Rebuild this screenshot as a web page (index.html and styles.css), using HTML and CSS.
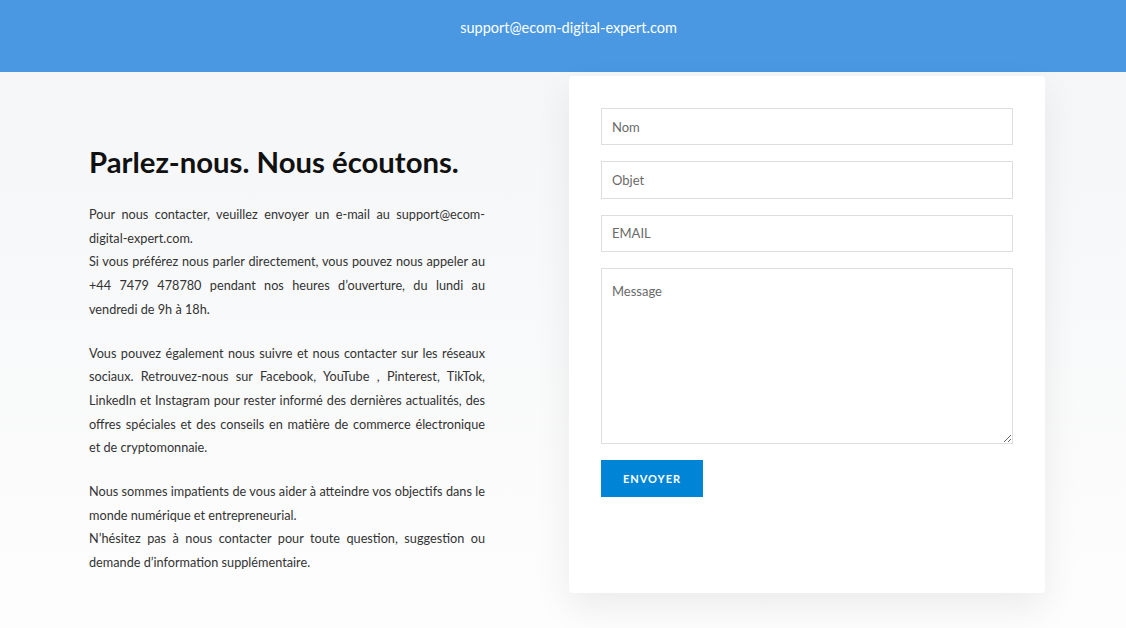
FILE: index.html
```html
<!DOCTYPE html>
<html lang="fr">
<head>
<meta charset="utf-8">
<title>Contact</title>
<link rel="stylesheet" href="styles.css">
</head>
<body>
<header class="topbar">
  <span class="topbar-email">support@ecom-digital-expert.com</span>
</header>
<main class="contact">
  <section class="intro">
    <h1 class="intro-title">Parlez-nous. Nous écoutons.</h1>
    <p class="intro-text">Pour nous contacter, veuillez envoyer un e-mail au support@ecom-digital-expert.com.<br>Si vous préférez nous parler directement, vous pouvez nous appeler au +44 7479 478780 pendant nos heures d’ouverture, du lundi au vendredi de 9h à 18h.</p>
    <p class="intro-text">Vous pouvez également nous suivre et nous contacter sur les réseaux sociaux. Retrouvez-nous sur Facebook, YouTube , Pinterest, TikTok, LinkedIn et Instagram pour rester informé des dernières actualités, des offres spéciales et des conseils en matière de commerce électronique et de cryptomonnaie.</p>
    <p class="intro-text">Nous sommes impatients de vous aider à atteindre vos objectifs dans le monde numérique et entrepreneurial.<br>N’hésitez pas à nous contacter pour toute question, suggestion ou demande d’information supplémentaire.</p>
  </section>
  <section class="card">
    <form class="form">
      <input class="field" type="text" placeholder="Nom">
      <input class="field" type="text" placeholder="Objet">
      <input class="field" type="email" placeholder="EMAIL">
      <textarea class="field field-area" placeholder="Message"></textarea>
      <button class="send" type="button">ENVOYER</button>
    </form>
  </section>
</main>
</body>
</html>
```
FILE: styles.css
```css
* { box-sizing: border-box; }
html, body { margin: 0; padding: 0; }
body {
  font-family: Lato, "Open Sans", sans-serif;
  background: linear-gradient(to bottom, #f5f6f8 72px, #fdfdfd 628px);
  color: #333;
  height: 628px;
  overflow: hidden;
}
.topbar {
  height: 72px;
  background: #4a98e2;
  display: flex;
  justify-content: center;
  padding: 19px 0 0 11px;
}
.topbar-email {
  color: #fff;
  font-size: 14.5px;
  line-height: 18px;
}
.contact {
  display: flex;
  align-items: flex-start;
  padding: 4px 0 0 89px;
  gap: 84px;
}
.intro {
  width: 396px;
  padding-top: 69px;
}
.intro-title {
  margin: 0 0 24px;
  font-size: 29.3px;
  line-height: 34px;
  font-weight: 700;
  color: #111;
}
.intro-text {
  margin: 0 0 20px;
  font-size: 12.7px;
  line-height: 23.7px;
  text-align: justify;
  color: #333;
}
.card {
  width: 476px;
  height: 517px;
  background: #fff;
  border-radius: 4px;
  box-shadow: 0 14px 36px rgba(0, 0, 0, 0.07);
  padding: 32px;
}
.form {
  display: flex;
  flex-direction: column;
  align-items: flex-start;
  gap: 16px;
}
.field {
  width: 412px;
  height: 37.4px;
  border: 1px solid #dedede;
  border-radius: 0;
  background: #fff;
  padding: 0 10px;
  font-family: Lato, sans-serif;
  font-size: 13px;
  color: #333;
  outline: none;
}
.field::placeholder { color: #6a6a6a; }
.field-area {
  height: 176px;
  padding-top: 14px;
  resize: vertical;
}
.send {
  width: 102px;
  height: 37px;
  border: none;
  background: #0085d6;
  color: #fff;
  font-family: Lato, sans-serif;
  font-weight: 700;
  font-size: 11px;
  letter-spacing: 1px;
  cursor: pointer;
}
```
